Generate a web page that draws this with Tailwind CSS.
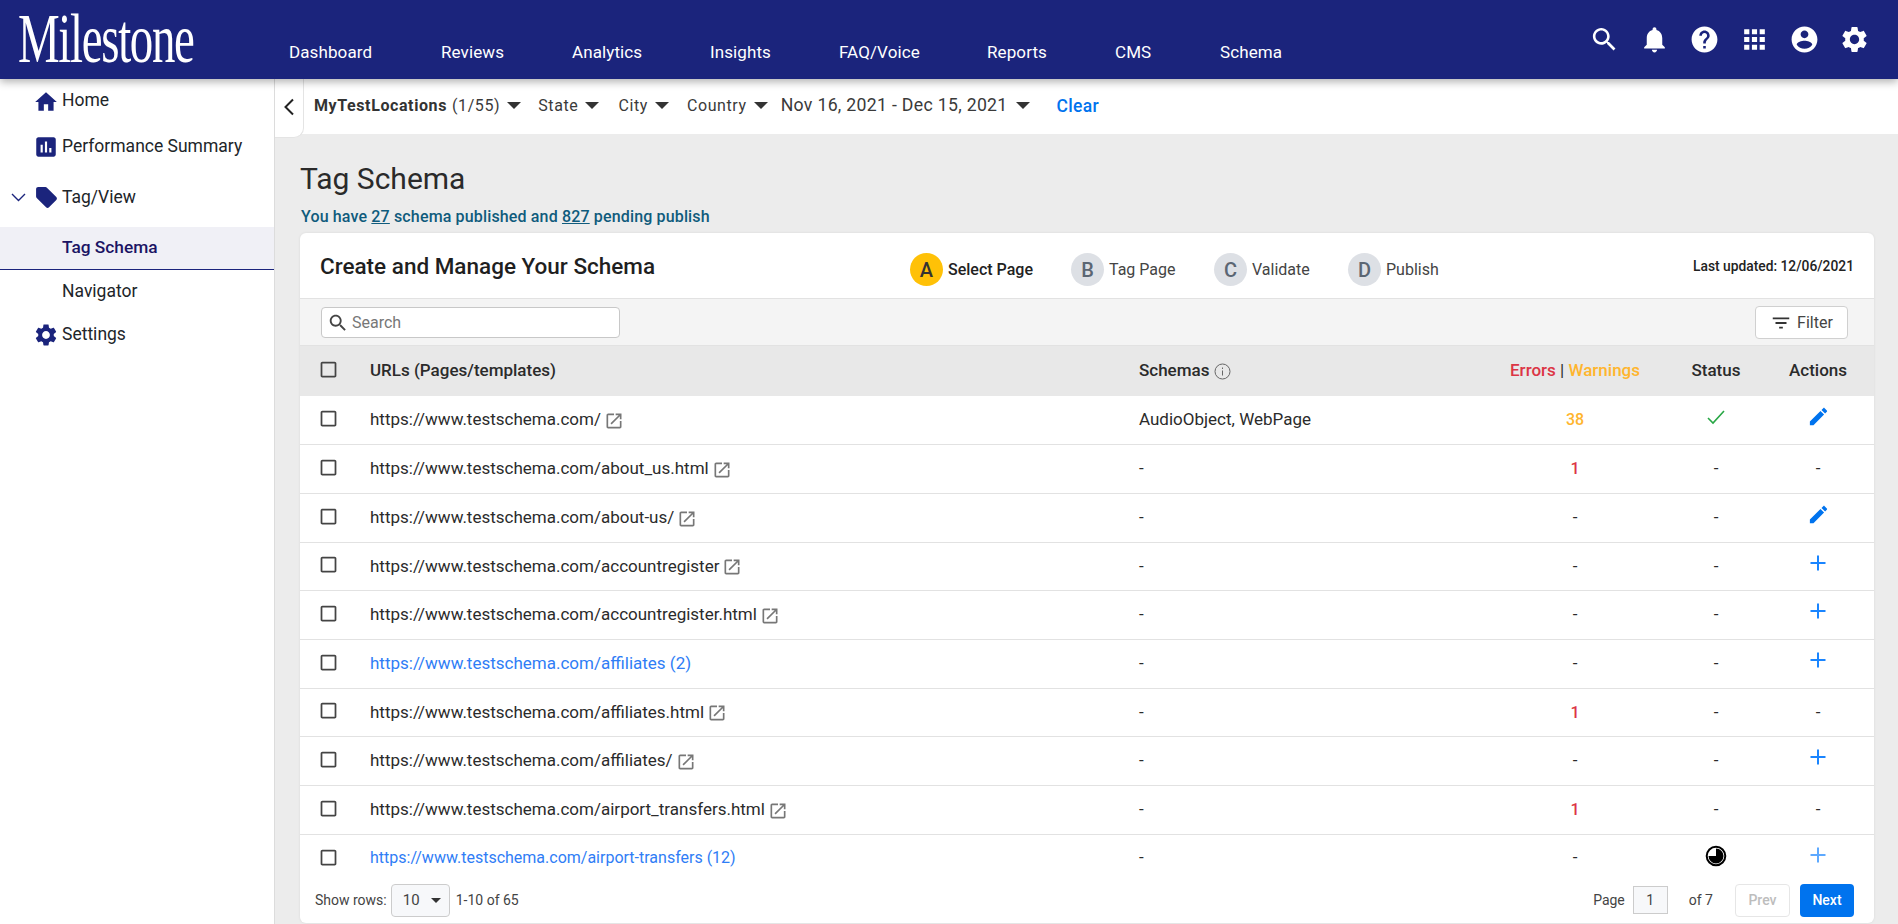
<!DOCTYPE html>
<html>
<head>
<meta charset="utf-8">
<script src="https://cdn.jsdelivr.net/npm/@tailwindcss/browser@4"></script>
<title>Tag Schema</title>
</head>
<body class="font-['Roboto',sans-serif] bg-[#ececec] text-[#212529]">
<div class="w-[1898px] h-[924px] overflow-hidden flex flex-col">
  <header class="h-[79px] shrink-0 bg-[#1b247c] flex relative z-10 shadow-[0_3px_8px_rgba(0,0,0,0.3)]">
    <div class="w-[289px] shrink-0 pl-[18px] pt-[1px] overflow-visible">
      <div class="font-['Liberation_Serif',serif] text-white text-[70px] leading-[76px] scale-x-[0.67] origin-left w-[280px] tracking-[-2px]">Milestone</div>
    </div>
    <nav class="flex-1 flex items-center text-white text-[17px] tracking-[0.1px] pt-[27px]">
      <a class="w-[152px]">Dashboard</a>
      <a class="w-[131px]">Reviews</a>
      <a class="w-[138px]">Analytics</a>
      <a class="w-[129px]">Insights</a>
      <a class="w-[148px]">FAQ/Voice</a>
      <a class="w-[128px]">Reports</a>
      <a class="w-[105px]">CMS</a>
      <a>Schema</a>
    </nav>
    <div class="flex items-center gap-[19px] pr-[28px] pb-[1px] text-white">
      <svg class="w-[31px] h-[31px] fill-current" viewBox="0 0 24 24"><path d="M15.5 14h-.79l-.28-.27C15.41 12.59 16 11.11 16 9.5 16 5.91 13.09 3 9.5 3S3 5.91 3 9.5 5.91 16 9.5 16c1.61 0 3.09-.59 4.23-1.57l.27.28v.79l5 4.99L20.49 19l-4.99-5zm-6 0C7.01 14 5 11.99 5 9.5S7.01 5 9.5 5 14 7.01 14 9.5 11.99 14 9.5 14z"/></svg>
      <svg class="w-[31px] h-[31px] fill-current" viewBox="0 0 24 24"><path d="M12 22c1.1 0 2-.9 2-2h-4c0 1.1.89 2 2 2zm6-6v-5c0-3.07-1.64-5.64-4.5-6.32V4c0-.83-.67-1.5-1.5-1.5s-1.5.67-1.5 1.5v.68C7.63 5.36 6 7.92 6 11v5l-2 2v1h16v-1l-2-2z"/></svg>
      <svg class="w-[31px] h-[31px] fill-current" viewBox="0 0 24 24"><path d="M12 2C6.48 2 2 6.48 2 12s4.48 10 10 10 10-4.48 10-10S17.52 2 12 2zm1 17h-2v-2h2v2zm2.07-7.75l-.9.92C13.45 12.9 13 13.5 13 15h-2v-.5c0-1.1.45-2.1 1.17-2.83l1.24-1.26c.37-.36.59-.86.59-1.41 0-1.1-.9-2-2-2s-2 .9-2 2H8c0-2.21 1.79-4 4-4s4 1.79 4 4c0 .88-.36 1.68-.93 2.25z"/></svg>
      <svg class="w-[31px] h-[31px] fill-current" viewBox="0 0 24 24"><path d="M4 8h4V4H4v4zm6 12h4v-4h-4v4zm-6 0h4v-4H4v4zm0-6h4v-4H4v4zm6 0h4v-4h-4v4zm6-10v4h4V4h-4zm-6 4h4V4h-4v4zm6 6h4v-4h-4v4zm0 6h4v-4h-4v4z"/></svg>
      <svg class="w-[31px] h-[31px] fill-current" viewBox="0 0 24 24"><path d="M12 2C6.48 2 2 6.48 2 12s4.48 10 10 10 10-4.48 10-10S17.52 2 12 2zm0 3c1.66 0 3 1.34 3 3s-1.34 3-3 3-3-1.34-3-3 1.34-3 3-3zm0 14.2c-2.5 0-4.71-1.28-6-3.22.03-1.99 4-3.08 6-3.08 1.99 0 5.97 1.09 6 3.08-1.29 1.94-3.5 3.22-6 3.22z"/></svg>
      <svg class="w-[31px] h-[31px] fill-current" viewBox="0 0 24 24"><path d="M19.14 12.94c.04-.3.06-.61.06-.94 0-.32-.02-.64-.07-.94l2.03-1.58c.18-.14.23-.41.12-.61l-1.92-3.32c-.12-.22-.37-.29-.59-.22l-2.39.96c-.5-.38-1.03-.7-1.62-.94l-.36-2.54c-.04-.24-.24-.41-.48-.41h-3.84c-.24 0-.43.17-.47.41l-.36 2.54c-.59.24-1.13.57-1.62.94l-2.39-.96c-.22-.08-.47 0-.59.22L2.74 8.87c-.12.21-.08.47.12.61l2.03 1.58c-.05.3-.09.63-.09.94s.02.64.07.94l-2.03 1.58c-.18.14-.23.41-.12.61l1.92 3.32c.12.22.37.29.59.22l2.39-.96c.5.38 1.03.7 1.62.94l.36 2.54c.05.24.24.41.48.41h3.84c.24 0 .44-.17.47-.41l.36-2.54c.59-.24 1.13-.56 1.62-.94l2.39.96c.22.08.47 0 .59-.22l1.92-3.32c.12-.22.07-.47-.12-.61l-2.01-1.58zM12 15.6c-1.98 0-3.6-1.62-3.6-3.6s1.62-3.6 3.6-3.6 3.6 1.62 3.6 3.6-1.62 3.6-3.6 3.6z"/></svg>
    </div>
  </header>

  <div class="flex-1 flex min-h-0">
    <aside class="w-[275px] shrink-0 bg-white border-r border-[#dcdcdc] text-[17.5px] text-[#212529] flex flex-col">
      <div class="h-[44px] mt-[1px] flex items-center pl-[33px] gap-[3px]">
        <svg class="w-[26px] h-[26px] fill-[#1b247c]" viewBox="0 0 24 24"><path d="M10 20v-6h4v6h5v-8h3L12 3 2 12h3v8z"/></svg><span class="-mt-[3px]">Home</span>
      </div>
      <div class="h-[46px] flex items-center pl-[33px] gap-[3px]">
        <svg class="w-[26px] h-[26px] fill-[#1b247c]" viewBox="0 0 24 24"><path d="M19 3H5c-1.1 0-2 .9-2 2v14c0 1.1.9 2 2 2h14c1.1 0 2-.9 2-2V5c0-1.1-.9-2-2-2zM9 17H7v-7h2v7zm4 0h-2V7h2v10zm4 0h-2v-4h2v4z"/></svg><span class="-mt-[2px]">Performance Summary</span>
      </div>
      <div class="h-[57px] flex items-center pl-[11px] pb-[2px]">
        <svg class="w-[15px] h-[15px] stroke-[#1b247c] fill-none" viewBox="0 0 15 15"><path d="M1 4l6.5 6.5L14 4" stroke-width="1.4"/></svg>
        <svg class="w-[25px] h-[25px] ml-[8px] fill-[#1b247c]" viewBox="0 0 24 24"><path d="M21.41 11.58l-9-9C12.05 2.22 11.55 2 11 2H4c-1.1 0-2 .9-2 2v7c0 .55.22 1.05.59 1.42l9 9c.36.36.86.58 1.41.58.55 0 1.05-.22 1.41-.59l7-7c.37-.36.59-.86.59-1.41 0-.55-.23-1.06-.59-1.42z"/></svg>
        <span class="ml-[3px]">Tag/View</span>
      </div>
      <div class="h-[43px] bg-[#f0f0f6] border-b border-[#1b247c] flex items-center pl-[62px] text-[17.3px] text-[#1b1464] font-medium">Tag Schema</div>
      <div class="h-[43px] flex items-center pl-[62px]">Navigator</div>
      <div class="h-[43px] flex items-center pl-[33px] gap-[3px]">
        <svg class="w-[26px] h-[26px] fill-[#1b247c]" viewBox="0 0 24 24"><path d="M19.14 12.94c.04-.3.06-.61.06-.94 0-.32-.02-.64-.07-.94l2.03-1.58c.18-.14.23-.41.12-.61l-1.92-3.32c-.12-.22-.37-.29-.59-.22l-2.39.96c-.5-.38-1.03-.7-1.62-.94l-.36-2.54c-.04-.24-.24-.41-.48-.41h-3.84c-.24 0-.43.17-.47.41l-.36 2.54c-.59.24-1.13.57-1.62.94l-2.39-.96c-.22-.08-.47 0-.59.22L2.74 8.87c-.12.21-.08.47.12.61l2.03 1.58c-.05.3-.09.63-.09.94s.02.64.07.94l-2.03 1.58c-.18.14-.23.41-.12.61l1.92 3.32c.12.22.37.29.59.22l2.39-.96c.5.38 1.03.7 1.62.94l.36 2.54c.05.24.24.41.48.41h3.84c.24 0 .44-.17.47-.41l.36-2.54c.59-.24 1.13-.56 1.62-.94l2.39.96c.22.08.47 0 .59-.22l1.92-3.32c.12-.22.07-.47-.12-.61l-2.01-1.58zM12 15.6c-1.98 0-3.6-1.62-3.6-3.6s1.62-3.6 3.6-3.6 3.6 1.62 3.6 3.6-1.62 3.6-3.6 3.6z"/></svg><span>Settings</span>
      </div>
    </aside>

    <main class="flex-1 min-w-0 flex flex-col relative">
      <div class="h-[55px] shrink-0 bg-white flex items-center pl-[39px] pb-[2px] text-[16px] text-[#3a3a3a] tracking-[0.6px]">
        <span class="font-bold text-[#333]">MyTestLocations</span><span class="ml-[5px]">(1/55)</span>
        <svg class="w-[14px] h-[7px] ml-[7px] fill-[#333]" viewBox="0 0 12 6"><path d="M0 0h12L6 6z"/></svg>
        <span class="ml-[17px]">State</span>
        <svg class="w-[14px] h-[7px] ml-[7px] fill-[#333]" viewBox="0 0 12 6"><path d="M0 0h12L6 6z"/></svg>
        <span class="ml-[19px]">City</span>
        <svg class="w-[14px] h-[7px] ml-[7px] fill-[#333]" viewBox="0 0 12 6"><path d="M0 0h12L6 6z"/></svg>
        <span class="ml-[18px]">Country</span>
        <svg class="w-[14px] h-[7px] ml-[7px] fill-[#333]" viewBox="0 0 12 6"><path d="M0 0h12L6 6z"/></svg>
        <span class="ml-[13px] text-[17.7px] tracking-[0.3px]">Nov 16, 2021 - Dec 15, 2021</span>
        <svg class="w-[14px] h-[7px] ml-[8px] fill-[#333]" viewBox="0 0 12 6"><path d="M0 0h12L6 6z"/></svg>
        <span class="ml-[27px] text-[17.5px] font-medium text-[#0073ee] tracking-[0.3px] mt-[2px]">Clear</span>
      </div>
      <button class="absolute left-0 top-0 w-[29px] h-[59px] bg-white rounded-br-[10px] border-r border-b border-[#e4e4e4] flex items-center justify-center pb-[2px]">
        <svg class="w-[12px] h-[18px] stroke-[#222] fill-none" viewBox="0 0 12 18"><path d="M10 1.5L2.5 9l7.5 7.5" stroke-width="2"/></svg>
      </button>

      <div class="flex-1 min-h-0 pl-[25px] pr-[24px] pb-[1px] flex flex-col">
        <h1 class="text-[30px] font-normal leading-[34px] mt-[28px] text-[#2a2a2a]">Tag Schema</h1>
        <p class="text-[16px] font-medium text-[#0f5b7c] leading-[20px] mt-[11px] pl-[1px] tracking-[0.15px]">You have <u>27</u> schema published and <u>827</u> pending publish</p>

        <section class="mt-[6px] flex-1 min-h-0 bg-white rounded-[6px] flex flex-col overflow-hidden shadow-[0_0_3px_rgba(0,0,0,0.08)]">
          <div class="h-[66px] shrink-0 flex items-center relative border-b border-[#e2e2e2] pl-[20px] pr-[20px]">
            <h2 class="text-[22.5px] font-medium text-[#1f1f1f] w-[590px] mt-[3px]">Create and Manage Your Schema</h2>
            <div class="flex items-center text-[16px] mt-[8px]">
              <span class="w-[33px] h-[33px] rounded-full bg-[#ffc107] flex items-center justify-center text-[20px] font-medium text-[#333]">A</span><span class="ml-[5px] w-[123px] font-medium text-[#222]">Select Page</span>
              <span class="w-[33px] h-[33px] rounded-full bg-[#dde0e5] flex items-center justify-center text-[20px] font-medium text-[#5b6673]">B</span><span class="ml-[5px] w-[105px] text-[#444]">Tag Page</span>
              <span class="w-[33px] h-[33px] rounded-full bg-[#dde0e5] flex items-center justify-center text-[20px] font-medium text-[#5b6673]">C</span><span class="ml-[5px] w-[96px] text-[#444]">Validate</span>
              <span class="w-[33px] h-[33px] rounded-full bg-[#dde0e5] flex items-center justify-center text-[20px] font-medium text-[#5b6673]">D</span><span class="ml-[5px] text-[#444]">Publish</span>
            </div>
            <span class="ml-auto text-[13.8px] font-medium text-[#222] mt-[2px]">Last updated: 12/06/2021</span>
          </div>

          <div class="h-[47px] shrink-0 bg-[#f4f4f4] border-b border-[#e2e2e2] flex items-center justify-between pl-[21px] pr-[26px]">
            <div class="w-[299px] h-[31px] bg-white border border-[#c8c8c8] rounded-[4px] flex items-center pl-[5px] pt-[1px] text-[16px] text-[#777] gap-[3px]">
              <svg class="w-[22px] h-[22px] fill-[#444]" viewBox="0 0 24 24"><path d="M15.5 14h-.79l-.28-.27C15.41 12.59 16 11.11 16 9.5 16 5.91 13.09 3 9.5 3S3 5.91 3 9.5 5.91 16 9.5 16c1.61 0 3.09-.59 4.23-1.57l.27.28v.79l5 4.99L20.49 19l-4.99-5zm-6 0C7.01 14 5 11.99 5 9.5S7.01 5 9.5 5 14 7.01 14 9.5 11.99 14 9.5 14z"/></svg>Search
            </div>
            <button class="w-[93px] h-[33px] bg-white border border-[#d0d0d0] rounded-[4px] flex items-center justify-center gap-[5px] pt-[2px] text-[16px] text-[#444]">
              <svg class="w-[22px] h-[22px] fill-[#333]" viewBox="0 0 24 24"><path d="M10 18h4v-2h-4v2zM3 6v2h18V6H3zm3 7h12v-2H6v2z"/></svg>Filter
            </button>
          </div>

          <div class="h-[50px] shrink-0 bg-[#e8e8e8] grid grid-cols-[70px_769px_366px_140px_142px_62px] items-center text-[17px] font-medium text-[#2b2b2b]">
            <span class="pl-[18px] -mt-[3px]"><svg class="w-[21px] h-[21px] fill-[#444]" viewBox="0 0 24 24"><path d="M19 5v14H5V5h14m0-2H5c-1.1 0-2 .9-2 2v14c0 1.1.9 2 2 2h14c1.1 0 2-.9 2-2V5c0-1.1-.9-2-2-2z"/></svg></span>
            <span>URLs (Pages/templates)</span>
            <span class="flex items-center gap-[5px]">Schemas <svg class="w-[17px] h-[17px] stroke-[#666] fill-none" viewBox="0 0 17 17"><circle cx="8.5" cy="8.5" r="7.5"/><path d="M8.5 7.5v5M8.5 4.5v1.5"/></svg></span>
            <span class="text-center"><span class="text-[#dc3545]">Errors</span> <span class="font-normal">|</span> <span class="text-[#ffb52e]">Warnings</span></span>
            <span class="text-center">Status</span>
            <span class="text-center">Actions</span>
          </div>

          <div class="h-[49px] shrink-0 border-b border-[#e2e2e2] grid grid-cols-[70px_769px_366px_140px_142px_62px] items-center text-[17px] text-[#2b2b2b]">
            <span class="pl-[18px]"><svg class="w-[21px] h-[21px] fill-[#444] -mt-[4px]" viewBox="0 0 24 24"><path d="M19 5v14H5V5h14m0-2H5c-1.1 0-2 .9-2 2v14c0 1.1.9 2 2 2h14c1.1 0 2-.9 2-2V5c0-1.1-.9-2-2-2z"/></svg></span>
            <span class="flex items-center gap-[3px]">https://www.testschema.com/<svg class="w-[20px] h-[20px] fill-[#777] mt-[1px]" viewBox="0 0 24 24"><path d="M19 19H5V5h7V3H5c-1.11 0-2 .9-2 2v14c0 1.1.89 2 2 2h14c1.1 0 2-.9 2-2v-7h-2v7zM14 3v2h3.59l-9.83 9.83 1.41 1.41L19 6.41V10h2V3h-7z"/></svg></span>
            <span>AudioObject, WebPage</span>
            <span class="text-center text-[16px] font-medium text-[#ffb52e]">38</span>
            <span class="flex justify-center"><svg class="w-[22px] h-[22px] fill-none stroke-[#28a745] -mt-[6px]" viewBox="0 0 22 22"><path d="M3 12l5 5L19 5" stroke-width="1.6"/></svg></span>
            <span class="flex justify-center"><svg class="w-[23px] h-[23px] fill-[#0073ee] -mt-[8px]" viewBox="0 0 24 24"><path d="M3 17.25V21h3.75L17.81 9.94l-3.75-3.75L3 17.25zM20.71 7.04c.39-.39.39-1.02 0-1.41l-2.34-2.34c-.39-.39-1.02-.39-1.41 0l-1.83 1.83 3.75 3.75 1.83-1.83z"/></svg></span>
          </div>

          <div class="h-[49px] shrink-0 border-b border-[#e2e2e2] grid grid-cols-[70px_769px_366px_140px_142px_62px] items-center text-[17px] text-[#2b2b2b]">
            <span class="pl-[18px]"><svg class="w-[21px] h-[21px] fill-[#444] -mt-[4px]" viewBox="0 0 24 24"><path d="M19 5v14H5V5h14m0-2H5c-1.1 0-2 .9-2 2v14c0 1.1.9 2 2 2h14c1.1 0 2-.9 2-2V5c0-1.1-.9-2-2-2z"/></svg></span>
            <span class="flex items-center gap-[3px]">https://www.testschema.com/about_us.html<svg class="w-[20px] h-[20px] fill-[#777] mt-[1px]" viewBox="0 0 24 24"><path d="M19 19H5V5h7V3H5c-1.11 0-2 .9-2 2v14c0 1.1.89 2 2 2h14c1.1 0 2-.9 2-2v-7h-2v7zM14 3v2h3.59l-9.83 9.83 1.41 1.41L19 6.41V10h2V3h-7z"/></svg></span>
            <span>-</span>
            <span class="text-center text-[16px] font-medium text-[#dc3545]">1</span>
            <span class="text-center">-</span>
            <span class="text-center">-</span>
          </div>

          <div class="h-[49px] shrink-0 border-b border-[#e2e2e2] grid grid-cols-[70px_769px_366px_140px_142px_62px] items-center text-[17px] text-[#2b2b2b]">
            <span class="pl-[18px]"><svg class="w-[21px] h-[21px] fill-[#444] -mt-[4px]" viewBox="0 0 24 24"><path d="M19 5v14H5V5h14m0-2H5c-1.1 0-2 .9-2 2v14c0 1.1.9 2 2 2h14c1.1 0 2-.9 2-2V5c0-1.1-.9-2-2-2z"/></svg></span>
            <span class="flex items-center gap-[3px]">https://www.testschema.com/about-us/<svg class="w-[20px] h-[20px] fill-[#777] mt-[1px]" viewBox="0 0 24 24"><path d="M19 19H5V5h7V3H5c-1.11 0-2 .9-2 2v14c0 1.1.89 2 2 2h14c1.1 0 2-.9 2-2v-7h-2v7zM14 3v2h3.59l-9.83 9.83 1.41 1.41L19 6.41V10h2V3h-7z"/></svg></span>
            <span>-</span>
            <span class="text-center">-</span>
            <span class="text-center">-</span>
            <span class="flex justify-center"><svg class="w-[23px] h-[23px] fill-[#0073ee] -mt-[8px]" viewBox="0 0 24 24"><path d="M3 17.25V21h3.75L17.81 9.94l-3.75-3.75L3 17.25zM20.71 7.04c.39-.39.39-1.02 0-1.41l-2.34-2.34c-.39-.39-1.02-.39-1.41 0l-1.83 1.83 3.75 3.75 1.83-1.83z"/></svg></span>
          </div>

          <div class="h-[48px] shrink-0 border-b border-[#e2e2e2] grid grid-cols-[70px_769px_366px_140px_142px_62px] items-center text-[17px] text-[#2b2b2b]">
            <span class="pl-[18px]"><svg class="w-[21px] h-[21px] fill-[#444] -mt-[4px]" viewBox="0 0 24 24"><path d="M19 5v14H5V5h14m0-2H5c-1.1 0-2 .9-2 2v14c0 1.1.9 2 2 2h14c1.1 0 2-.9 2-2V5c0-1.1-.9-2-2-2z"/></svg></span>
            <span class="flex items-center gap-[3px]">https://www.testschema.com/accountregister<svg class="w-[20px] h-[20px] fill-[#777] mt-[1px]" viewBox="0 0 24 24"><path d="M19 19H5V5h7V3H5c-1.11 0-2 .9-2 2v14c0 1.1.89 2 2 2h14c1.1 0 2-.9 2-2v-7h-2v7zM14 3v2h3.59l-9.83 9.83 1.41 1.41L19 6.41V10h2V3h-7z"/></svg></span>
            <span>-</span>
            <span class="text-center">-</span>
            <span class="text-center">-</span>
            <span class="flex justify-center"><svg class="w-[22px] h-[22px] stroke-[#1a85ff] fill-none -mt-[8px]" viewBox="0 0 22 22"><path d="M11 3.5v15M3.5 11h15" stroke-width="2"/></svg></span>
          </div>

          <div class="h-[49px] shrink-0 border-b border-[#e2e2e2] grid grid-cols-[70px_769px_366px_140px_142px_62px] items-center text-[17px] text-[#2b2b2b]">
            <span class="pl-[18px]"><svg class="w-[21px] h-[21px] fill-[#444] -mt-[4px]" viewBox="0 0 24 24"><path d="M19 5v14H5V5h14m0-2H5c-1.1 0-2 .9-2 2v14c0 1.1.9 2 2 2h14c1.1 0 2-.9 2-2V5c0-1.1-.9-2-2-2z"/></svg></span>
            <span class="flex items-center gap-[3px]">https://www.testschema.com/accountregister.html<svg class="w-[20px] h-[20px] fill-[#777] mt-[1px]" viewBox="0 0 24 24"><path d="M19 19H5V5h7V3H5c-1.11 0-2 .9-2 2v14c0 1.1.89 2 2 2h14c1.1 0 2-.9 2-2v-7h-2v7zM14 3v2h3.59l-9.83 9.83 1.41 1.41L19 6.41V10h2V3h-7z"/></svg></span>
            <span>-</span>
            <span class="text-center">-</span>
            <span class="text-center">-</span>
            <span class="flex justify-center"><svg class="w-[22px] h-[22px] stroke-[#1a85ff] fill-none -mt-[8px]" viewBox="0 0 22 22"><path d="M11 3.5v15M3.5 11h15" stroke-width="2"/></svg></span>
          </div>

          <div class="h-[49px] shrink-0 border-b border-[#e2e2e2] grid grid-cols-[70px_769px_366px_140px_142px_62px] items-center text-[17px] text-[#2b2b2b]">
            <span class="pl-[18px]"><svg class="w-[21px] h-[21px] fill-[#444] -mt-[4px]" viewBox="0 0 24 24"><path d="M19 5v14H5V5h14m0-2H5c-1.1 0-2 .9-2 2v14c0 1.1.9 2 2 2h14c1.1 0 2-.9 2-2V5c0-1.1-.9-2-2-2z"/></svg></span>
            <span class="text-[#2f7df6]">https://www.testschema.com/affiliates (2)</span>
            <span>-</span>
            <span class="text-center">-</span>
            <span class="text-center">-</span>
            <span class="flex justify-center"><svg class="w-[22px] h-[22px] stroke-[#1a85ff] fill-none -mt-[8px]" viewBox="0 0 22 22"><path d="M11 3.5v15M3.5 11h15" stroke-width="2"/></svg></span>
          </div>

          <div class="h-[48px] shrink-0 border-b border-[#e2e2e2] grid grid-cols-[70px_769px_366px_140px_142px_62px] items-center text-[17px] text-[#2b2b2b]">
            <span class="pl-[18px]"><svg class="w-[21px] h-[21px] fill-[#444] -mt-[4px]" viewBox="0 0 24 24"><path d="M19 5v14H5V5h14m0-2H5c-1.1 0-2 .9-2 2v14c0 1.1.9 2 2 2h14c1.1 0 2-.9 2-2V5c0-1.1-.9-2-2-2z"/></svg></span>
            <span class="flex items-center gap-[3px]">https://www.testschema.com/affiliates.html<svg class="w-[20px] h-[20px] fill-[#777] mt-[1px]" viewBox="0 0 24 24"><path d="M19 19H5V5h7V3H5c-1.11 0-2 .9-2 2v14c0 1.1.89 2 2 2h14c1.1 0 2-.9 2-2v-7h-2v7zM14 3v2h3.59l-9.83 9.83 1.41 1.41L19 6.41V10h2V3h-7z"/></svg></span>
            <span>-</span>
            <span class="text-center text-[16px] font-medium text-[#dc3545]">1</span>
            <span class="text-center">-</span>
            <span class="text-center">-</span>
          </div>

          <div class="h-[49px] shrink-0 border-b border-[#e2e2e2] grid grid-cols-[70px_769px_366px_140px_142px_62px] items-center text-[17px] text-[#2b2b2b]">
            <span class="pl-[18px]"><svg class="w-[21px] h-[21px] fill-[#444] -mt-[4px]" viewBox="0 0 24 24"><path d="M19 5v14H5V5h14m0-2H5c-1.1 0-2 .9-2 2v14c0 1.1.9 2 2 2h14c1.1 0 2-.9 2-2V5c0-1.1-.9-2-2-2z"/></svg></span>
            <span class="flex items-center gap-[3px]">https://www.testschema.com/affiliates/<svg class="w-[20px] h-[20px] fill-[#777] mt-[1px]" viewBox="0 0 24 24"><path d="M19 19H5V5h7V3H5c-1.11 0-2 .9-2 2v14c0 1.1.89 2 2 2h14c1.1 0 2-.9 2-2v-7h-2v7zM14 3v2h3.59l-9.83 9.83 1.41 1.41L19 6.41V10h2V3h-7z"/></svg></span>
            <span>-</span>
            <span class="text-center">-</span>
            <span class="text-center">-</span>
            <span class="flex justify-center"><svg class="w-[22px] h-[22px] stroke-[#1a85ff] fill-none -mt-[8px]" viewBox="0 0 22 22"><path d="M11 3.5v15M3.5 11h15" stroke-width="2"/></svg></span>
          </div>

          <div class="h-[49px] shrink-0 border-b border-[#e2e2e2] grid grid-cols-[70px_769px_366px_140px_142px_62px] items-center text-[17px] text-[#2b2b2b]">
            <span class="pl-[18px]"><svg class="w-[21px] h-[21px] fill-[#444] -mt-[4px]" viewBox="0 0 24 24"><path d="M19 5v14H5V5h14m0-2H5c-1.1 0-2 .9-2 2v14c0 1.1.9 2 2 2h14c1.1 0 2-.9 2-2V5c0-1.1-.9-2-2-2z"/></svg></span>
            <span class="flex items-center gap-[3px]">https://www.testschema.com/airport_transfers.html<svg class="w-[20px] h-[20px] fill-[#777] mt-[1px]" viewBox="0 0 24 24"><path d="M19 19H5V5h7V3H5c-1.11 0-2 .9-2 2v14c0 1.1.89 2 2 2h14c1.1 0 2-.9 2-2v-7h-2v7zM14 3v2h3.59l-9.83 9.83 1.41 1.41L19 6.41V10h2V3h-7z"/></svg></span>
            <span>-</span>
            <span class="text-center text-[16px] font-medium text-[#dc3545]">1</span>
            <span class="text-center">-</span>
            <span class="text-center">-</span>
          </div>

          <div class="h-[46px] shrink-0 grid grid-cols-[70px_769px_366px_140px_142px_62px] items-center text-[17px] text-[#2b2b2b]">
            <span class="pl-[18px]"><svg class="w-[21px] h-[21px] fill-[#444] -mt-[2px]" viewBox="0 0 24 24"><path d="M19 5v14H5V5h14m0-2H5c-1.1 0-2 .9-2 2v14c0 1.1.9 2 2 2h14c1.1 0 2-.9 2-2V5c0-1.1-.9-2-2-2z"/></svg></span>
            <span class="text-[16px] text-[#2f7df6]">https://www.testschema.com/airport-transfers (12)</span>
            <span>-</span>
            <span class="text-center">-</span>
            <span class="flex justify-center"><svg class="w-[22px] h-[22px] -mt-[5px]" viewBox="0 0 22 22"><circle cx="11" cy="11" r="9.3" fill="none" stroke="#000" stroke-width="2"/><path d="M11 3.5a7.5 7.5 0 1 1-7.5 7.5H11z" fill="#000"/></svg></span>
            <span class="flex justify-center opacity-70"><svg class="w-[22px] h-[22px] stroke-[#1a85ff] fill-none -mt-[7px]" viewBox="0 0 22 22"><path d="M11 3.5v15M3.5 11h15" stroke-width="2"/></svg></span>
          </div>

          <div class="flex-1 min-h-0 flex items-center pl-[15px] pr-[20px] pb-[4px] text-[14px] text-[#444]">
            <span>Show rows:</span>
            <span class="ml-[4px] w-[59px] h-[33px] bg-[#f7f8fa] border border-[#ccc] rounded-[4px] flex items-center pl-[11px] gap-[11px] text-[15px]">10<svg class="w-[10px] h-[5px] fill-[#333]" viewBox="0 0 10 5"><path d="M0 0h10L5 5z"/></svg></span>
            <span class="ml-[6px]">1-10 of 65</span>
            <span class="ml-auto">Page</span>
            <span class="ml-[8px] w-[35px] h-[28px] bg-[#f7f8fa] border border-[#ccc] flex items-center justify-center text-[14px]">1</span>
            <span class="ml-[21px]">of 7</span>
            <span class="ml-[22px] w-[55px] h-[33px] border border-[#e6e6e6] rounded-[4px] flex items-center justify-center font-medium text-[#bdbdbd]">Prev</span>
            <span class="ml-[10px] w-[54px] h-[33px] bg-[#0073ee] rounded-[4px] flex items-center justify-center font-medium text-white">Next</span>
          </div>
        </section>
      </div>
    </main>
  </div>
</div>
</body>
</html>
